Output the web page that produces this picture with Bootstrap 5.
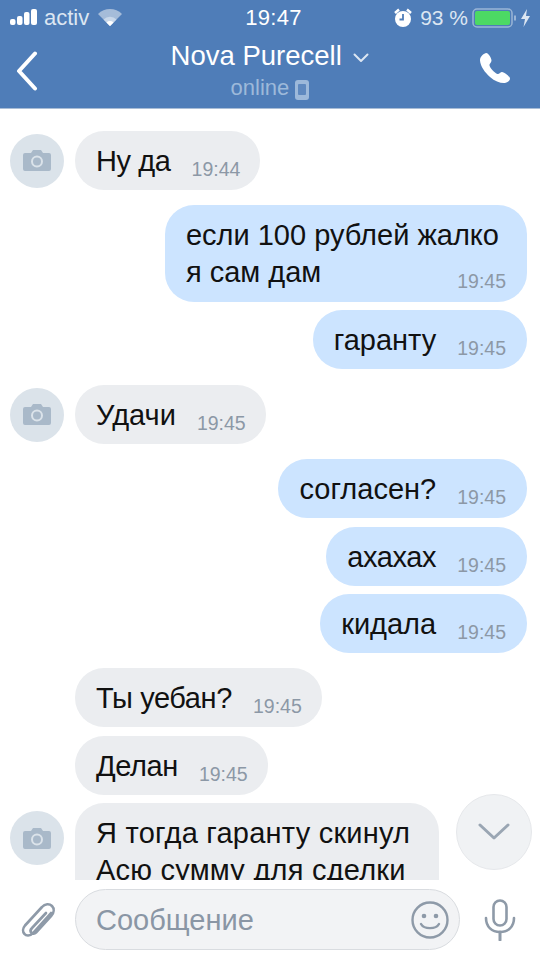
<!DOCTYPE html>
<html lang="ru">
<head>
<meta charset="utf-8">
<title>Nova Purecell</title>
<link href="https://cdn.jsdelivr.net/npm/bootstrap@5.3.0/dist/css/bootstrap.min.css" rel="stylesheet">
<style>
html,body{margin:0;width:540px;height:960px;overflow:hidden;background:#fff;font-family:"Liberation Sans",Arial,sans-serif}
.phone{width:540px;height:960px;position:relative}
.head{height:109px;background:#4f7db8;color:#fff;border-bottom:1px solid #a9bdd6;flex:none}
.sbar{height:35px;padding:0 8px 0 10px;line-height:35px}
.sbar svg{display:block}
.sleft,.sright{width:200px}
.clock{font-size:22px;font-weight:400;letter-spacing:.3px;margin-left:5px}
.carrier{color:#dce6f2;font-size:22px;margin-left:6px}
.pct{color:#dce6f2;font-size:21px}
.nbar{height:73px}
.navside{width:90px}
.ttl{font-size:27.500px;line-height:34px;margin-top:4px}
.sub{font-size:22px;line-height:28px;color:#9db9da;margin-top:1px}
.feed{flex:1 1 0;overflow:hidden;padding:22px 13px 0 10px;position:relative}
.mrow{display:flex;align-items:center;min-height:59px}
.gap8{margin-top:8px}.gap9{margin-top:9px}.gap15{margin-top:15px}.gap16{margin-top:16px}
.out{justify-content:flex-end}
.ava{width:54px;height:54px;border-radius:50%;background:#dbe3ea;display:flex;align-items:center;justify-content:center;flex:none;margin-right:11px}
.noava{margin-left:65px}
.bub{border-radius:29px;padding:12px 21px 10px 21px;font-size:29px;line-height:37px;color:#111}
.inb{background:#ebedf0;padding-right:20px}
.outb{background:#cce4ff}
.stamp{font-size:19.500px;line-height:20px;letter-spacing:0;color:#8c98a6;margin-left:21px;position:relative;top:5px}
.bub2{padding-right:28px}
.bub2 .stamp{display:block;text-align:right;margin:-20px -7px 1px 0;top:0}
.tight{letter-spacing:-.4px}
.wide{letter-spacing:.23px}
.cut{align-items:flex-start}
.cut .ava{margin-top:8px}
.cut .bub{border-radius:29px 29px 0 0;height:120px;width:364px}
.down{position:absolute;right:8px;top:685px;width:76px;height:76px;border-radius:50%;background:#f0f2f4;border:1px solid #e6e8eb}
.foot{height:80px;background:#fff;flex:none;padding:9px 0 10px}
.clip{width:75px;flex:none}
.field{width:385px;height:61px;border-radius:31px;background:#f2f3f5;border:1px solid #d9dce0;font-size:29px;color:#8a96a5;padding:2px 10px 0 20px;flex:none}
.mic{flex:1}
.smile{margin-top:-2px}
.backic{margin:16px 0 0 16px}
.phic{margin:17px 29px 0 0}
</style>
</head>
<body>
<div class="phone d-flex flex-column">
  <header class="head">
    <div class="sbar d-flex align-items-center justify-content-between">
      <div class="sleft d-flex align-items-center">
        <svg width="28" height="18" viewBox="0 0 28 18"><g fill="#fff"><rect x="0" y="10" width="5.500" height="6" rx="2"/><rect x="7" y="7" width="5.500" height="9" rx="2"/><rect x="14" y="3" width="5.500" height="13" rx="2"/><rect x="21" y="0" width="6" height="16" rx="2"/></g></svg>
        <span class="carrier">activ</span>
        <svg class="ms-2" width="26" height="20" viewBox="0 0 26 20"><path d="M13 18 L1 6 A17 17 0 0 1 25 6 Z" fill="#a5bcd9"/><path d="M13 18 L6.500 11.500 A9.200 9.200 0 0 1 19.500 11.500 Z" fill="#c9d8ea"/><path d="M13 18 L9.500 14.500 A5 5 0 0 1 16.500 14.500 Z" fill="#fff"/></svg>
      </div>
      <div class="clock">19:47</div>
      <div class="sright d-flex align-items-center justify-content-end">
        <svg width="18" height="20" viewBox="0 0 18 20"><circle cx="9" cy="11" r="8" fill="#fff"/><path d="M9 6v5.500H5.500" fill="none" stroke="#4f7db8" stroke-width="1.800"/><path d="M1 5 L5 1.500M17 5 L13 1.500" stroke="#fff" stroke-width="2.500"/></svg>
        <span class="pct ms-2">93 %</span>
        <svg class="ms-1" width="60" height="20" viewBox="0 0 60 20"><rect x="1" y="1" width="39" height="18" rx="4" fill="none" stroke="#9ab5d6" stroke-width="1.500"/><rect x="3" y="3" width="35" height="14" rx="2" fill="#4cd964"/><rect x="42" y="7.500" width="2" height="5" fill="#9ab5d6"/><path d="M55 1 L49 11 H53 L51.500 19 L58 8 H54 Z" fill="#dce6f2"/></svg>
      </div>
    </div>
    <div class="nbar d-flex align-items-start">
      <div class="navside">
        <svg class="d-block backic" width="22" height="40" viewBox="0 0 22 40"><path d="M19 2.500 L3 20 L19 37.500" fill="none" stroke="#fff" stroke-width="4" stroke-linecap="round" stroke-linejoin="round"/></svg>
      </div>
      <div class="flex-grow-1 text-center">
        <div class="ttl">Nova Purecell
          <svg class="ms-1 align-middle" width="16" height="10" viewBox="0 0 16 10"><path d="M1.500 1.500 L8 8 L14.500 1.500" fill="none" stroke="#dce6f2" stroke-width="2" stroke-linecap="round" stroke-linejoin="round"/></svg>
        </div>
        <div class="sub">online
          <svg class="align-text-bottom" width="14" height="20" viewBox="0 0 14 20"><rect width="14" height="20" rx="3" fill="#9db9da"/><rect x="3" y="4" width="8" height="11" rx="1" fill="#5f89bf"/></svg>
        </div>
      </div>
      <div class="navside d-flex justify-content-end">
        <svg class="phic" width="32" height="32" viewBox="0 0 32 32"><path d="M7 1 C4 2 1 4.500 1 8.500 C1.500 14.500 6 20.500 11 25 C16 29.500 22 31.500 26 31 C29 30.500 31 28.500 31 26.500 C31 24.500 25 20 23 20 C21.500 20 20 22.500 18.500 22 C15.500 21 11 16 10.500 13.500 C10 12 12.500 10.500 12.500 8.500 C12.500 6 9 0.500 7 1 Z" fill="#fff"/></svg>
      </div>
    </div>
  </header>

  <main class="feed">
    <div class="mrow"><div class="ava"><svg width="28" height="21" viewBox="0 0 28 21"><path d="M2 3h6l2-3h8l2 3h6a2 2 0 0 1 2 2v14a2 2 0 0 1-2 2H2a2 2 0 0 1-2-2V5a2 2 0 0 1 2-2z" fill="#a9b9c9"/><circle cx="14" cy="11.500" r="5" fill="none" stroke="#dbe3ea" stroke-width="2"/></svg></div><div class="bub inb tight">Ну да<span class="stamp">19:44</span></div></div>

    <div class="mrow out gap15"><div class="bub outb bub2">если 100 рублей жалко<br>я сам дам<span class="stamp">19:45</span></div></div>
    <div class="mrow out gap8"><div class="bub outb">гаранту<span class="stamp">19:45</span></div></div>

    <div class="mrow gap16"><div class="ava"><svg width="28" height="21" viewBox="0 0 28 21"><path d="M2 3h6l2-3h8l2 3h6a2 2 0 0 1 2 2v14a2 2 0 0 1-2 2H2a2 2 0 0 1-2-2V5a2 2 0 0 1 2-2z" fill="#a9b9c9"/><circle cx="14" cy="11.500" r="5" fill="none" stroke="#dbe3ea" stroke-width="2"/></svg></div><div class="bub inb">Удачи<span class="stamp">19:45</span></div></div>

    <div class="mrow out gap15"><div class="bub outb">согласен?<span class="stamp">19:45</span></div></div>
    <div class="mrow out gap9"><div class="bub outb tight">ахахах<span class="stamp">19:45</span></div></div>
    <div class="mrow out gap8"><div class="bub outb">кидала<span class="stamp">19:45</span></div></div>

    <div class="mrow noava gap15"><div class="bub inb tight">Ты уебан?<span class="stamp">19:45</span></div></div>
    <div class="mrow noava gap9"><div class="bub inb tight">Делан<span class="stamp">19:45</span></div></div>
    <div class="mrow cut gap8"><div class="ava"><svg width="28" height="21" viewBox="0 0 28 21"><path d="M2 3h6l2-3h8l2 3h6a2 2 0 0 1 2 2v14a2 2 0 0 1-2 2H2a2 2 0 0 1-2-2V5a2 2 0 0 1 2-2z" fill="#a9b9c9"/><circle cx="14" cy="11.500" r="5" fill="none" stroke="#dbe3ea" stroke-width="2"/></svg></div><div class="bub inb wide">Я тогда гаранту скинул<br>Асю сумму для сделки</div></div>
    <div class="down d-flex align-items-center justify-content-center"><svg width="32" height="20" viewBox="0 0 32 20"><path d="M2 3 L16 16 L30 3" fill="none" stroke="#9aa6b3" stroke-width="3" stroke-linecap="round" stroke-linejoin="round"/></svg></div>
  </main>

  <footer class="foot d-flex align-items-center">
    <div class="clip d-flex justify-content-center">
      <svg width="36" height="40" viewBox="0 0 36 40"><path d="M31 11 L13 31 C10 34.500 6 34 4.500 32 C2.500 30 2.500 26.500 5 23.500 L22 5 C25 1.500 29.500 1.500 32 4 C34.500 6.500 34 10.500 31.500 13.500 L16 30.500 C14.500 32 12.500 32 11.500 31 C10 29.500 10.500 27.500 12 26 L26 11" transform="translate(0 2)" fill="none" stroke="#8e9aa8" stroke-width="2.600" stroke-linecap="round" stroke-linejoin="round"/></svg>
    </div>
    <div class="field d-flex align-items-center justify-content-between">
      <span>Сообщение</span>
      <svg class="smile" width="38" height="38" viewBox="0 0 38 38"><circle cx="19" cy="19" r="17.500" fill="none" stroke="#8e9aa8" stroke-width="2.400"/><circle cx="13" cy="15" r="2.300" fill="#8e9aa8"/><circle cx="25" cy="15" r="2.300" fill="#8e9aa8"/><path d="M10 23 C13 28.500 25 28.500 28 23" fill="none" stroke="#8e9aa8" stroke-width="2.400" stroke-linecap="round"/></svg>
    </div>
    <div class="mic d-flex justify-content-center">
      <svg width="32" height="42" viewBox="0 0 32 42"><rect x="9.500" y="1.500" width="13" height="25" rx="6.500" fill="none" stroke="#8e9aa8" stroke-width="2.600"/><path d="M2 19 C2 28 8 33 16 33 C24 33 30 28 30 19" fill="none" stroke="#8e9aa8" stroke-width="2.600" stroke-linecap="round"/><path d="M16 33 V41" stroke="#8e9aa8" stroke-width="3" stroke-linecap="round"/></svg>
    </div>
  </footer>
</div>
<script src="https://cdn.jsdelivr.net/npm/bootstrap@5.3.0/dist/js/bootstrap.bundle.min.js"></script>
</body>
</html>
